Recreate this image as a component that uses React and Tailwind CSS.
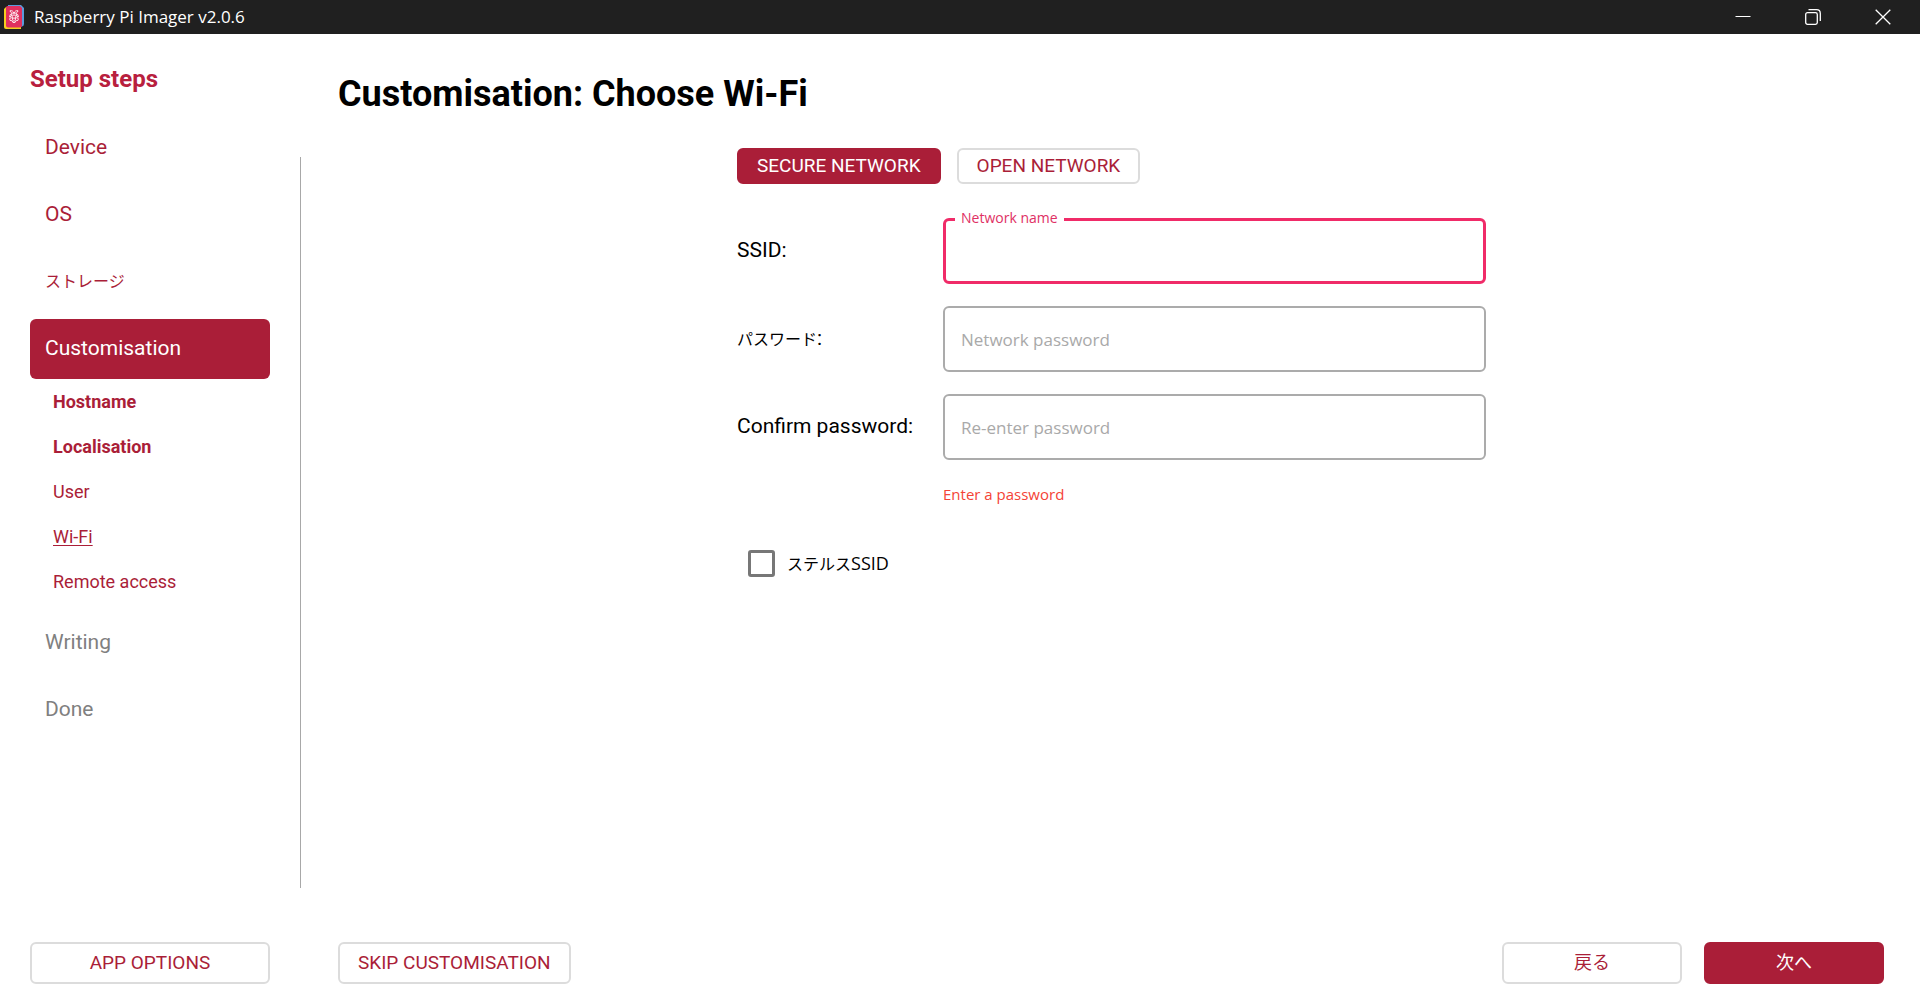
import { useState } from "react";

const FONT = "font-['Roboto','Noto_Sans_CJK_JP',sans-serif]";
const SYSTEM_FONT = "font-['Open_Sans','Noto_Sans_CJK_JP',sans-serif]";

const SUB_STEPS = [
  { label: "Hostname", style: "font-bold" },
  { label: "Localisation", style: "font-bold" },
  { label: "User", style: "" },
  { label: "Wi-Fi", style: "underline underline-offset-2", current: true },
  { label: "Remote access", style: "" },
];

function AppIcon() {
  return (
    <svg width="20" height="24" viewBox="0 0 20 24" aria-hidden="true">
      <path d="M0 4L2 2H17V24H2Q0 24 0 22Z" fill="#f5cf1f" />
      <path d="M4 0H17L20 3V19Q20 21 18 21.500L4 22Z" fill="#5b9bdc" />
      <path d="M3.500 1H16L18 3V20.500Q18 22.500 16 22.500H4Q2 22.500 2 20.500V2.500Q2 1 3.500 1Z" fill="#e0305f" />
      <g fill="none" stroke="#fff" strokeWidth="0.900">
        <path d="M10 8.200C8 8.400 6.200 7.500 6 5.800C8 5.300 9.500 6.400 10 8.200C10.500 6.400 12 5.300 14 5.800C13.800 7.500 12 8.400 10 8.200Z" />
        <circle cx="10" cy="11.600" r="1.700" />
        <path d="M8 8.600Q5.600 9 5.600 12Q8 11.500 8 8.600ZM12 8.600Q14.400 9 14.400 12Q12 11.500 12 8.600Z" />
        <circle cx="7.200" cy="14.200" r="1.500" />
        <circle cx="12.800" cy="14.200" r="1.500" />
        <path d="M8.200 16.700Q10 14.600 11.800 16.700Q10 18.900 8.200 16.700Z" />
      </g>
    </svg>
  );
}

function TitleBar() {
  const control = "flex h-[34px] w-[70px] items-center justify-center hover:bg-[#333333]";
  return (
    <header className="flex h-[34px] items-center justify-between bg-[#202020] pr-[2px] pl-1">
      <div className="flex items-center gap-[10px]">
        <AppIcon />
        <span className={`${SYSTEM_FONT} text-[17px] leading-6 text-white`}>Raspberry Pi Imager v2.0.6</span>
      </div>
      <div className="flex">
        <button type="button" aria-label="Minimise" className={control}>
          <svg width="16" height="16" viewBox="0 0 16 16" fill="none" stroke="#fff">
            <path d="M0.500 7.500H15.500" />
          </svg>
        </button>
        <button type="button" aria-label="Restore" className={control}>
          <svg width="16" height="16" viewBox="0 0 16 16" fill="none" stroke="#fff" strokeWidth="1.300">
            <rect x="0.700" y="3.700" width="11.600" height="11.600" rx="1.800" />
            <path d="M3.500 0.700H11.500Q15.300 0.700 15.300 4.500V12" />
          </svg>
        </button>
        <button type="button" aria-label="Close" className={control}>
          <svg width="16" height="16" viewBox="0 0 16 16" fill="none" stroke="#fff" strokeWidth="1.300">
            <path d="M0.700 0.700L15.300 15.300M15.300 0.700L0.700 15.300" />
          </svg>
        </button>
      </div>
    </header>
  );
}

function Step({ children, tone }) {
  return (
    <button type="button" className={`flex h-[60px] w-full items-center rounded-md px-[15px] text-left ${tone}`}>
      {children}
    </button>
  );
}

function SetupNav() {
  return (
    <aside className="w-[240px] shrink-0 pt-[29px]">
      <h2 className="text-2xl leading-8 font-bold text-[#b8203e]">Setup steps</h2>
      <nav aria-label="Setup steps" className="mt-[23px] flex flex-col gap-[7px] text-[21px]">
        <Step tone="text-[#aa1e38]">Device</Step>
        <Step tone="text-[#aa1e38]">OS</Step>
        <Step tone="text-[#aa1e38]">
          <span className="text-base">ストレージ</span>
        </Step>
        <div className="pb-[2px]">
          <Step tone="bg-[#aa1e38] text-white">Customisation</Step>
          <ul className="pl-[23px] text-lg text-[#aa1e38]">
            {SUB_STEPS.map((step) => (
              <li key={step.label} className="flex h-[45px] items-center">
                <a href="#" aria-current={step.current ? "step" : undefined} className={step.style}>
                  {step.label}
                </a>
              </li>
            ))}
          </ul>
        </div>
        <Step tone="text-[#808080]">Writing</Step>
        <Step tone="text-[#808080]">Done</Step>
      </nav>
    </aside>
  );
}

function WifiForm() {
  const [hidden, setHidden] = useState(false);
  const field = `${SYSTEM_FONT} h-[66px] w-full rounded-md bg-white pl-4 text-[17px] outline-none placeholder:text-[#a9a9a9]`;
  const quiet = "border-2 border-[#ababab]";
  const button = "h-9 rounded-md border-2 px-[18px] leading-8";
  return (
    <form className="mx-auto mt-[34px] w-full max-w-[749px]">
      <div className="flex gap-4 text-[19px]">
        <button type="button" className={`${button} border-[#aa1e38] bg-[#aa1e38] text-white`}>
          SECURE NETWORK
        </button>
        <button type="button" className={`${button} border-[#dcdcdc] bg-white text-[#aa1e38]`}>
          OPEN NETWORK
        </button>
      </div>

      <div className="mt-[34px] grid grid-cols-[206px_1fr] items-center gap-y-[22px] text-[21px] text-black">
        <label htmlFor="ssid">SSID:</label>
        <div className="relative">
          <input id="ssid" type="text" className={`${field} block border-[3px] border-[#f02b68]`} />
          <label
            htmlFor="ssid"
            className={`${SYSTEM_FONT} absolute -top-[10px] left-3 bg-white px-[6px] text-sm leading-5 text-[#e03064]`}
          >
            Network name
          </label>
        </div>

        <label htmlFor="password">
          <span className="text-base">パスワード</span>:
        </label>
        <input id="password" type="password" placeholder="Network password" className={`${field} ${quiet}`} />

        <label htmlFor="confirm">Confirm password:</label>
        <input id="confirm" type="password" placeholder="Re-enter password" className={`${field} ${quiet}`} />

        <p role="alert" className={`${SYSTEM_FONT} col-start-2 text-[15px] leading-6 text-[#f44336]`}>
          Enter a password
        </p>
      </div>

      <div className="mt-[43px] flex items-center gap-3 pl-[11px]">
        <input
          id="hidden-ssid"
          type="checkbox"
          checked={hidden}
          onChange={(event) => setHidden(event.target.checked)}
          className="size-[27px] appearance-none rounded-[3px] border-[3px] border-[#777777] bg-white checked:bg-[#aa1e38]"
        />
        <label htmlFor="hidden-ssid" className={`${SYSTEM_FONT} text-lg leading-7 text-black`}>
          <span className="text-base">ステルス</span>SSID
        </label>
      </div>
    </form>
  );
}

function Footer() {
  const button = "h-[42px] rounded-md border-2 text-[19px] leading-9";
  const outlined = "border-[#dcdcdc] bg-white text-[#aa1e38]";
  return (
    <footer className="flex items-center px-[30px] pb-[21px]">
      <button type="button" className={`${button} ${outlined} w-[240px]`}>APP OPTIONS</button>
      <div className="flex flex-1 items-center pr-[6px] pl-[68px]">
        <button type="button" className={`${button} ${outlined} px-[18px]`}>SKIP CUSTOMISATION</button>
        <div className="ml-auto flex gap-[22px]">
          <button type="button" className={`${button} ${outlined} w-[180px]`}>
            <span className="text-lg">戻る</span>
          </button>
          <button type="button" className={`${button} w-[180px] border-[#aa1e38] bg-[#aa1e38] text-white`}>
            <span className="text-lg">次へ</span>
          </button>
        </div>
      </div>
    </footer>
  );
}

export default function App() {
  return (
    <div lang="ja" className={`${FONT} flex min-h-screen flex-col bg-white`}>
      <TitleBar />
      <div className="flex flex-1 pr-[35px] pl-[30px]">
        <SetupNav />
        <div className="mt-[123px] mb-[54px] ml-[30px] w-px bg-[#a8a8a8]" />
        <main className="flex-1 pt-10 pl-[37px]">
          <h1 className="text-4xl leading-10 font-bold text-black">Customisation: Choose Wi-Fi</h1>
          <WifiForm />
        </main>
      </div>
      <Footer />
    </div>
  );
}
